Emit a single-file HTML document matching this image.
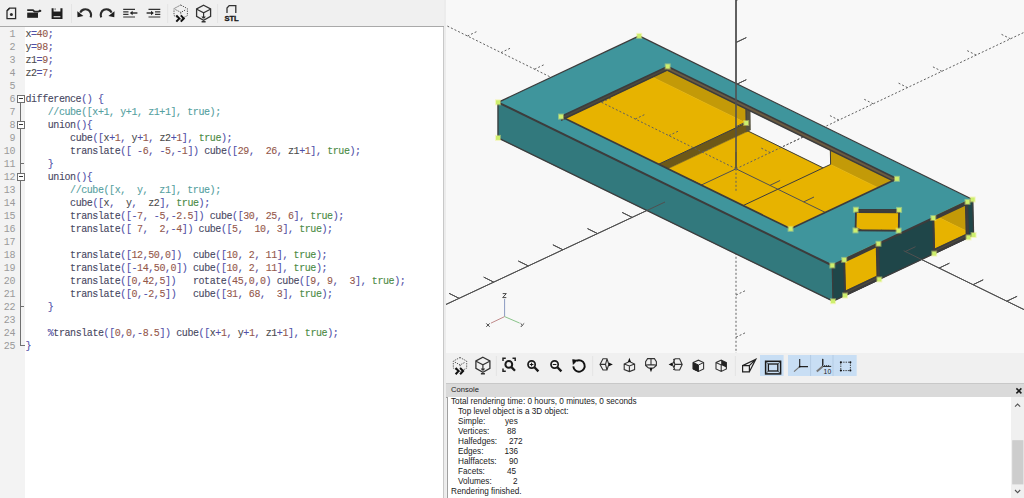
<!DOCTYPE html>
<html><head><meta charset="utf-8"><style>
html,body{margin:0;padding:0}
body{width:1024px;height:498px;overflow:hidden;position:relative;background:#f0f0f0;font-family:"Liberation Sans",sans-serif}
#tb1{position:absolute;left:0;top:0;width:444px;height:26px;background:#f0f0f0;border-bottom:1px solid #a9a9a9}
#ed{position:absolute;left:0;top:27px;width:444px;height:471px;background:#ffffff}
#gut{position:absolute;left:0;top:27px;width:25px;height:471px;background:#f3f3f3}
.ln{position:absolute;left:0;height:13px;line-height:13px;font-family:"Liberation Mono",monospace;font-size:10px;letter-spacing:-0.42px;white-space:pre}
.num{position:absolute;right:-15px;width:15px;text-align:right;color:#9a9a9a;display:none}
.code{position:absolute;left:25.4px;top:0;color:#474747;-webkit-text-stroke:0.1px currentColor}
.k{color:#47475f} .n{color:#94574a} .o{color:#5050a8} .i{color:#4a4a4a} .t{color:#4a8a44} .c{color:#54a0a0} .p{color:#4646a0}
.lnum{position:absolute;left:0;width:15px;text-align:right;height:13px;line-height:13px;font-family:"Liberation Mono",monospace;font-size:10px;color:#9a9a9a;letter-spacing:-0.42px}
.fbox{position:absolute;left:17px;width:6px;height:6px;border:1px solid #707070;background:#fff}
.fbox:after{content:"";position:absolute;left:1px;top:2px;width:4px;height:1px;background:#333}
#split{position:absolute;left:443px;top:27px;width:1px;height:471px;background:#c8c8c8} #split2{position:absolute;left:444px;top:0;width:2px;height:498px;background:#ececec}
#view{position:absolute;left:446px;top:0;width:578px;height:353px;background:#f8f8f8;overflow:hidden}
#tb2{position:absolute;left:446px;top:353px;width:578px;height:29px;background:#f0f0f0}
#chead{position:absolute;left:446px;top:383px;width:578px;height:13px;background:#dadada;border-bottom:1px solid #a0a0a0;border-top:1px solid #c8c8c8}
#chead span{position:absolute;left:5px;top:1px;font-size:7.6px;color:#222}
#cbody{position:absolute;left:447px;top:397px;width:577px;height:101px;background:#fff;border-left:1px solid #a0a0a0;box-sizing:border-box}
.cl{position:absolute;font-size:8.2px;color:#1a1a1a;line-height:10px;white-space:pre}
#sb{position:absolute;left:1011px;top:397px;width:13px;height:101px;background:#f0f0f0}
</style></head><body>
<div id="tb1"><svg width="444" height="26" style="position:absolute;left:0;top:0" fill="none" stroke="#2b2b2b" stroke-linecap="butt">
<!-- new -->
<path d="M9.5,8.2 H15.6 V18.6 H7 V10.8 Z" stroke-width="1.3"/>
<path d="M7,10.8 L9.5,8.2" stroke-width="1.3"/>
<circle cx="11.4" cy="14.6" r="1.5" fill="#2b2b2b" stroke="none"/>
<!-- open -->
<rect x="27.2" y="12.6" width="10.8" height="5.2" fill="#222" stroke="none"/>
<path d="M27.2,10.2 L33,10.2 L34.5,11.6 L38,11.6 L41,10.6" stroke-width="1.8"/>
<path d="M39,9.6 L41.6,10.7 L39.5,12.2 Z" fill="#222" stroke="none"/>
<!-- save -->
<path d="M51.6,8.2 H53.6 V11.6 H60.4 V8.2 H62.5 V19.1 H51.6 Z" fill="#1e1e1e" stroke="none"/>
<rect x="53.6" y="16.2" width="6.8" height="1.1" fill="#f0f0f0" stroke="none"/>
<rect x="54.6" y="8.2" width="1" height="2" fill="#666" stroke="none"/>
<line x1="71.5" y1="4" x2="71.5" y2="23" stroke="#e4e4e4" stroke-width="1"/>
<!-- undo -->
<path d="M90.6,17.4 A5.6,5.6 0 0 0 80.2,12.6" stroke-width="2.2"/>
<path d="M77.3,11.2 L83.4,16 L77.5,17.3 Z" fill="#1e1e1e" stroke="none"/>
<!-- redo -->
<path d="M101.2,17.4 A5.6,5.6 0 0 1 111.6,12.6" stroke-width="2.2"/>
<path d="M114.5,11.2 L108.4,16 L114.3,17.3 Z" fill="#1e1e1e" stroke="none"/>
<!-- unindent -->
<g stroke-width="1.2" stroke="#333">
<path d="M123.2,9.4 H135 M123.2,11.9 H128.5 M123.2,14.4 H128.5 M123.2,17 H135"/>
<path d="M131,13 H137.4" stroke-width="1.5"/>
</g>
<path d="M129.8,13 L132.6,10.8 L132.6,15.2 Z" fill="#222" stroke="none"/>
<!-- indent -->
<g stroke-width="1.2" stroke="#333">
<path d="M148.5,9.4 H160.3 M155,11.9 H160.3 M155,14.4 H160.3 M148.5,17 H160.3"/>
<path d="M146.6,13 H152.5" stroke-width="1.5"/>
</g>
<path d="M153.8,13 L151,10.8 L151,15.2 Z" fill="#222" stroke="none"/>
<line x1="167.7" y1="4" x2="167.7" y2="23" stroke="#e4e4e4" stroke-width="1"/>
<!-- preview -->
<g stroke="#555" stroke-width="1" stroke-dasharray="1.3,1.1">
<path d="M180.7,5 L187.4,8.6 L187.4,15.6 L180.7,19.2 L174,15.6 L174,8.6 Z"/>
<path d="M175.5,9.6 L180.8,12.4 L186.1,9.6 M180.8,12.4 V15"/>
</g>
<path d="M176.3,15.4 L179.3,18.4 L176.3,21.6 M180.8,15.4 L183.8,18.4 L180.8,21.6" stroke="#111" stroke-width="2"/>
<!-- render -->
<path d="M203.6,5.2 L210.6,9 L210.6,16.4 L203.6,20.2 L196.6,16.4 L196.6,9 Z" stroke="#333" stroke-width="1.3"/>
<path d="M196.8,9.2 L203.6,12.8 L210.4,9.2 M203.6,12.8 V17" stroke="#333" stroke-width="1.2"/>
<path d="M201.4,16.4 H205.8 L204.5,18.6 H202.7 Z M201.6,21 H205.6 V22.4 H201.6 Z" fill="#333" stroke="none"/>
<line x1="217.6" y1="4" x2="217.6" y2="23" stroke="#e4e4e4" stroke-width="1"/>
<!-- STL -->
<path d="M227,13 V8 L229.2,5.6 H235.8 V13" stroke="#333" stroke-width="1.3"/>
<text x="231.6" y="20.8" font-family="Liberation Sans" font-weight="bold" font-size="7.6" fill="#1a1a1a" stroke="#1a1a1a" stroke-width="0.35" text-anchor="middle" letter-spacing="-0.1">STL</text>
</svg>
</div>
<div id="ed"></div>
<div id="gut"></div>
<div class="lnum" style="top:28px">1</div><div class="lnum" style="top:41px">2</div><div class="lnum" style="top:54px">3</div><div class="lnum" style="top:67px">4</div><div class="lnum" style="top:80px">5</div><div class="lnum" style="top:93px">6</div><div class="lnum" style="top:106px">7</div><div class="lnum" style="top:119px">8</div><div class="lnum" style="top:132px">9</div><div class="lnum" style="top:145px">10</div><div class="lnum" style="top:158px">11</div><div class="lnum" style="top:171px">12</div><div class="lnum" style="top:184px">13</div><div class="lnum" style="top:197px">14</div><div class="lnum" style="top:210px">15</div><div class="lnum" style="top:223px">16</div><div class="lnum" style="top:236px">17</div><div class="lnum" style="top:249px">18</div><div class="lnum" style="top:262px">19</div><div class="lnum" style="top:275px">20</div><div class="lnum" style="top:288px">21</div><div class="lnum" style="top:301px">22</div><div class="lnum" style="top:314px">23</div><div class="lnum" style="top:327px">24</div><div class="lnum" style="top:340px">25</div>
<div style="position:absolute;left:20px;top:102px;width:1px;height:243px;background:#707070"></div><div style="position:absolute;left:20px;top:163px;width:4px;height:1px;background:#707070"></div><div style="position:absolute;left:20px;top:306px;width:4px;height:1px;background:#707070"></div><div style="position:absolute;left:20px;top:345px;width:5px;height:1px;background:#707070"></div>
<div class="fbox" style="top:95px"></div><div class="fbox" style="top:121px"></div><div class="fbox" style="top:173px"></div>
<div class="ln" style="top:28px"><span class="num">1</span><span class="code"><span class="i">x</span><span class="o">=</span><span class="n">40</span><span class="o">;</span></span></div>
<div class="ln" style="top:41px"><span class="num">2</span><span class="code"><span class="i">y</span><span class="o">=</span><span class="n">98</span><span class="o">;</span></span></div>
<div class="ln" style="top:54px"><span class="num">3</span><span class="code"><span class="i">z1</span><span class="o">=</span><span class="n">9</span><span class="o">;</span></span></div>
<div class="ln" style="top:67px"><span class="num">4</span><span class="code"><span class="i">z2</span><span class="o">=</span><span class="n">7</span><span class="o">;</span></span></div>
<div class="ln" style="top:80px"><span class="num">5</span><span class="code"></span></div>
<div class="ln" style="top:93px"><span class="num">6</span><span class="code"><span class="k">difference</span><span class="o">(</span><span class="o">)</span> <span class="o">{</span></span></div>
<div class="ln" style="top:106px"><span class="num">7</span><span class="code">    <span class="c">//cube([x+1, y+1, z1+1], true);</span></span></div>
<div class="ln" style="top:119px"><span class="num">8</span><span class="code">    <span class="k">union</span><span class="o">(</span><span class="o">)</span><span class="o">{</span></span></div>
<div class="ln" style="top:132px"><span class="num">9</span><span class="code">        <span class="k">cube</span><span class="o">(</span><span class="o">[</span><span class="i">x</span><span class="o">+</span><span class="n">1</span><span class="o">,</span> <span class="i">y</span><span class="o">+</span><span class="n">1</span><span class="o">,</span> <span class="i">z2</span><span class="o">+</span><span class="n">1</span><span class="o">]</span><span class="o">,</span> <span class="t">true</span><span class="o">)</span><span class="o">;</span></span></div>
<div class="ln" style="top:145px"><span class="num">10</span><span class="code">        <span class="k">translate</span><span class="o">(</span><span class="o">[</span> <span class="o">-</span><span class="n">6</span><span class="o">,</span> <span class="o">-</span><span class="n">5</span><span class="o">,</span><span class="o">-</span><span class="n">1</span><span class="o">]</span><span class="o">)</span> <span class="k">cube</span><span class="o">(</span><span class="o">[</span><span class="n">29</span><span class="o">,</span>  <span class="n">26</span><span class="o">,</span> <span class="i">z1</span><span class="o">+</span><span class="n">1</span><span class="o">]</span><span class="o">,</span> <span class="t">true</span><span class="o">)</span><span class="o">;</span></span></div>
<div class="ln" style="top:158px"><span class="num">11</span><span class="code">    <span class="o">}</span></span></div>
<div class="ln" style="top:171px"><span class="num">12</span><span class="code">    <span class="k">union</span><span class="o">(</span><span class="o">)</span><span class="o">{</span></span></div>
<div class="ln" style="top:184px"><span class="num">13</span><span class="code">        <span class="c">//cube([x,  y,  z1], true);</span></span></div>
<div class="ln" style="top:197px"><span class="num">14</span><span class="code">        <span class="k">cube</span><span class="o">(</span><span class="o">[</span><span class="i">x</span><span class="o">,</span>  <span class="i">y</span><span class="o">,</span>  <span class="i">z2</span><span class="o">]</span><span class="o">,</span> <span class="t">true</span><span class="o">)</span><span class="o">;</span></span></div>
<div class="ln" style="top:210px"><span class="num">15</span><span class="code">        <span class="k">translate</span><span class="o">(</span><span class="o">[</span><span class="o">-</span><span class="n">7</span><span class="o">,</span> <span class="o">-</span><span class="n">5</span><span class="o">,</span><span class="o">-</span><span class="n">2.5</span><span class="o">]</span><span class="o">)</span> <span class="k">cube</span><span class="o">(</span><span class="o">[</span><span class="n">30</span><span class="o">,</span> <span class="n">25</span><span class="o">,</span> <span class="n">6</span><span class="o">]</span><span class="o">,</span> <span class="t">true</span><span class="o">)</span><span class="o">;</span></span></div>
<div class="ln" style="top:223px"><span class="num">16</span><span class="code">        <span class="k">translate</span><span class="o">(</span><span class="o">[</span> <span class="n">7</span><span class="o">,</span>  <span class="n">2</span><span class="o">,</span><span class="o">-</span><span class="n">4</span><span class="o">]</span><span class="o">)</span> <span class="k">cube</span><span class="o">(</span><span class="o">[</span><span class="n">5</span><span class="o">,</span>  <span class="n">10</span><span class="o">,</span> <span class="n">3</span><span class="o">]</span><span class="o">,</span> <span class="t">true</span><span class="o">)</span><span class="o">;</span></span></div>
<div class="ln" style="top:236px"><span class="num">17</span><span class="code"></span></div>
<div class="ln" style="top:249px"><span class="num">18</span><span class="code">        <span class="k">translate</span><span class="o">(</span><span class="o">[</span><span class="n">12</span><span class="o">,</span><span class="n">50</span><span class="o">,</span><span class="n">0</span><span class="o">]</span><span class="o">)</span>  <span class="k">cube</span><span class="o">(</span><span class="o">[</span><span class="n">10</span><span class="o">,</span> <span class="n">2</span><span class="o">,</span> <span class="n">11</span><span class="o">]</span><span class="o">,</span> <span class="t">true</span><span class="o">)</span><span class="o">;</span></span></div>
<div class="ln" style="top:262px"><span class="num">19</span><span class="code">        <span class="k">translate</span><span class="o">(</span><span class="o">[</span><span class="o">-</span><span class="n">14</span><span class="o">,</span><span class="n">50</span><span class="o">,</span><span class="n">0</span><span class="o">]</span><span class="o">)</span> <span class="k">cube</span><span class="o">(</span><span class="o">[</span><span class="n">10</span><span class="o">,</span> <span class="n">2</span><span class="o">,</span> <span class="n">11</span><span class="o">]</span><span class="o">,</span> <span class="t">true</span><span class="o">)</span><span class="o">;</span></span></div>
<div class="ln" style="top:275px"><span class="num">20</span><span class="code">        <span class="k">translate</span><span class="o">(</span><span class="o">[</span><span class="n">0</span><span class="o">,</span><span class="n">42</span><span class="o">,</span><span class="n">5</span><span class="o">]</span><span class="o">)</span>   <span class="k">rotate</span><span class="o">(</span><span class="n">45</span><span class="o">,</span><span class="n">0</span><span class="o">,</span><span class="n">0</span><span class="o">)</span> <span class="k">cube</span><span class="o">(</span><span class="o">[</span><span class="n">9</span><span class="o">,</span> <span class="n">9</span><span class="o">,</span>  <span class="n">3</span><span class="o">]</span><span class="o">,</span> <span class="t">true</span><span class="o">)</span><span class="o">;</span></span></div>
<div class="ln" style="top:288px"><span class="num">21</span><span class="code">        <span class="k">translate</span><span class="o">(</span><span class="o">[</span><span class="n">0</span><span class="o">,</span><span class="o">-</span><span class="n">2</span><span class="o">,</span><span class="n">5</span><span class="o">]</span><span class="o">)</span>   <span class="k">cube</span><span class="o">(</span><span class="o">[</span><span class="n">31</span><span class="o">,</span> <span class="n">68</span><span class="o">,</span>  <span class="n">3</span><span class="o">]</span><span class="o">,</span> <span class="t">true</span><span class="o">)</span><span class="o">;</span></span></div>
<div class="ln" style="top:301px"><span class="num">22</span><span class="code">    <span class="o">}</span></span></div>
<div class="ln" style="top:314px"><span class="num">23</span><span class="code"></span></div>
<div class="ln" style="top:327px"><span class="num">24</span><span class="code">    <span class="p">%</span><span class="k">translate</span><span class="o">(</span><span class="o">[</span><span class="n">0</span><span class="o">,</span><span class="n">0</span><span class="o">,</span><span class="o">-</span><span class="n">8.5</span><span class="o">]</span><span class="o">)</span> <span class="k">cube</span><span class="o">(</span><span class="o">[</span><span class="i">x</span><span class="o">+</span><span class="n">1</span><span class="o">,</span> <span class="i">y</span><span class="o">+</span><span class="n">1</span><span class="o">,</span> <span class="i">z1</span><span class="o">+</span><span class="n">1</span><span class="o">]</span><span class="o">,</span> <span class="t">true</span><span class="o">)</span><span class="o">;</span></span></div>
<div class="ln" style="top:340px"><span class="num">25</span><span class="code"><span class="o">}</span></span></div>
<div id="split2"></div><div id="split"></div>
<div id="view"><svg width="578" height="353" viewBox="446 0 578 353" style="position:absolute;left:0;top:0">
<line x1="736.0" y1="168.8" x2="43.8" y2="492.6" stroke="#505050" stroke-width="1"/>
<line x1="736.0" y1="168.8" x2="1413.0" y2="499.8" stroke="#505050" stroke-width="1"/>
<line x1="736.0" y1="168.8" x2="736.0" y2="-673.2" stroke="#505050" stroke-width="1"/>
<line x1="736.0" y1="168.8" x2="1422.2" y2="-156.2" stroke="#606060" stroke-width="1" stroke-dasharray="2,2"/>
<line x1="736.0" y1="168.8" x2="64.6" y2="-163.2" stroke="#606060" stroke-width="1" stroke-dasharray="2,2"/>
<line x1="736.0" y1="168.8" x2="736.0" y2="1010.8" stroke="#606060" stroke-width="1" stroke-dasharray="2,2"/>
<line x1="701.4" y1="185.0" x2="691.3" y2="180.0" stroke="#505050" stroke-width="1"/>
<line x1="769.9" y1="185.4" x2="780.1" y2="180.5" stroke="#505050" stroke-width="1"/>
<line x1="736.0" y1="126.7" x2="746.3" y2="121.8" stroke="#505050" stroke-width="1"/>
<line x1="770.3" y1="152.6" x2="760.2" y2="147.6" stroke="#606060" stroke-width="1" stroke-dasharray="2,2"/>
<line x1="702.4" y1="152.2" x2="712.7" y2="147.3" stroke="#606060" stroke-width="1" stroke-dasharray="2,2"/>
<line x1="736.0" y1="210.9" x2="746.3" y2="206.0" stroke="#606060" stroke-width="1" stroke-dasharray="2,2"/>
<line x1="666.8" y1="201.2" x2="656.7" y2="196.2" stroke="#505050" stroke-width="1"/>
<line x1="803.7" y1="201.9" x2="814.0" y2="197.0" stroke="#505050" stroke-width="1"/>
<line x1="736.0" y1="84.6" x2="746.3" y2="79.7" stroke="#505050" stroke-width="1"/>
<line x1="804.6" y1="136.3" x2="794.5" y2="131.3" stroke="#606060" stroke-width="1" stroke-dasharray="2,2"/>
<line x1="668.9" y1="135.6" x2="679.2" y2="130.7" stroke="#606060" stroke-width="1" stroke-dasharray="2,2"/>
<line x1="736.0" y1="253.0" x2="746.3" y2="248.1" stroke="#606060" stroke-width="1" stroke-dasharray="2,2"/>
<line x1="632.2" y1="217.4" x2="622.1" y2="212.4" stroke="#505050" stroke-width="1"/>
<line x1="837.5" y1="218.5" x2="847.8" y2="213.6" stroke="#505050" stroke-width="1"/>
<line x1="736.0" y1="42.5" x2="746.3" y2="37.6" stroke="#505050" stroke-width="1"/>
<line x1="838.9" y1="120.1" x2="828.9" y2="115.1" stroke="#606060" stroke-width="1" stroke-dasharray="2,2"/>
<line x1="635.3" y1="119.0" x2="645.6" y2="114.1" stroke="#606060" stroke-width="1" stroke-dasharray="2,2"/>
<line x1="736.0" y1="295.1" x2="746.3" y2="290.2" stroke="#606060" stroke-width="1" stroke-dasharray="2,2"/>
<line x1="597.6" y1="233.6" x2="587.5" y2="228.6" stroke="#505050" stroke-width="1"/>
<line x1="871.4" y1="235.0" x2="881.7" y2="230.1" stroke="#505050" stroke-width="1"/>
<line x1="736.0" y1="0.4" x2="746.3" y2="-4.5" stroke="#505050" stroke-width="1"/>
<line x1="873.2" y1="103.8" x2="863.2" y2="98.8" stroke="#606060" stroke-width="1" stroke-dasharray="2,2"/>
<line x1="601.7" y1="102.4" x2="612.0" y2="97.5" stroke="#606060" stroke-width="1" stroke-dasharray="2,2"/>
<line x1="736.0" y1="337.2" x2="746.3" y2="332.3" stroke="#606060" stroke-width="1" stroke-dasharray="2,2"/>
<line x1="563.0" y1="249.8" x2="552.9" y2="244.8" stroke="#505050" stroke-width="1"/>
<line x1="905.2" y1="251.6" x2="915.5" y2="246.7" stroke="#505050" stroke-width="1"/>
<line x1="736.0" y1="-41.7" x2="746.3" y2="-46.6" stroke="#505050" stroke-width="1"/>
<line x1="907.5" y1="87.6" x2="897.5" y2="82.6" stroke="#606060" stroke-width="1" stroke-dasharray="2,2"/>
<line x1="568.1" y1="85.8" x2="578.4" y2="80.9" stroke="#606060" stroke-width="1" stroke-dasharray="2,2"/>
<line x1="736.0" y1="379.3" x2="746.3" y2="374.4" stroke="#606060" stroke-width="1" stroke-dasharray="2,2"/>
<line x1="528.3" y1="265.9" x2="518.3" y2="261.0" stroke="#505050" stroke-width="1"/>
<line x1="939.1" y1="268.1" x2="949.4" y2="263.2" stroke="#505050" stroke-width="1"/>
<line x1="736.0" y1="-83.8" x2="746.3" y2="-88.7" stroke="#505050" stroke-width="1"/>
<line x1="941.9" y1="71.3" x2="931.8" y2="66.3" stroke="#606060" stroke-width="1" stroke-dasharray="2,2"/>
<line x1="534.6" y1="69.2" x2="544.9" y2="64.3" stroke="#606060" stroke-width="1" stroke-dasharray="2,2"/>
<line x1="736.0" y1="421.4" x2="746.3" y2="416.5" stroke="#606060" stroke-width="1" stroke-dasharray="2,2"/>
<line x1="493.7" y1="282.1" x2="483.7" y2="277.1" stroke="#505050" stroke-width="1"/>
<line x1="973.0" y1="284.7" x2="983.2" y2="279.8" stroke="#505050" stroke-width="1"/>
<line x1="736.0" y1="-125.9" x2="746.3" y2="-130.8" stroke="#505050" stroke-width="1"/>
<line x1="976.2" y1="55.1" x2="966.1" y2="50.1" stroke="#606060" stroke-width="1" stroke-dasharray="2,2"/>
<line x1="501.0" y1="52.6" x2="511.3" y2="47.7" stroke="#606060" stroke-width="1" stroke-dasharray="2,2"/>
<line x1="736.0" y1="463.5" x2="746.3" y2="458.6" stroke="#606060" stroke-width="1" stroke-dasharray="2,2"/>
<line x1="459.1" y1="298.3" x2="449.0" y2="293.3" stroke="#505050" stroke-width="1"/>
<line x1="1006.8" y1="301.2" x2="1017.1" y2="296.3" stroke="#505050" stroke-width="1"/>
<line x1="736.0" y1="-168.0" x2="746.3" y2="-172.9" stroke="#505050" stroke-width="1"/>
<line x1="1010.5" y1="38.8" x2="1000.4" y2="33.8" stroke="#606060" stroke-width="1" stroke-dasharray="2,2"/>
<line x1="467.4" y1="36.0" x2="477.7" y2="31.1" stroke="#606060" stroke-width="1" stroke-dasharray="2,2"/>
<line x1="736.0" y1="505.6" x2="746.3" y2="500.7" stroke="#606060" stroke-width="1" stroke-dasharray="2,2"/>
<line x1="424.5" y1="314.5" x2="414.4" y2="309.5" stroke="#505050" stroke-width="1"/>
<line x1="1040.7" y1="317.8" x2="1050.9" y2="312.9" stroke="#505050" stroke-width="1"/>
<line x1="736.0" y1="-210.1" x2="746.3" y2="-215.0" stroke="#505050" stroke-width="1"/>
<line x1="1044.8" y1="22.6" x2="1034.7" y2="17.6" stroke="#606060" stroke-width="1" stroke-dasharray="2,2"/>
<line x1="433.9" y1="19.4" x2="444.2" y2="14.5" stroke="#606060" stroke-width="1" stroke-dasharray="2,2"/>
<line x1="736.0" y1="547.7" x2="746.3" y2="542.8" stroke="#606060" stroke-width="1" stroke-dasharray="2,2"/>
<line x1="389.9" y1="330.7" x2="379.8" y2="325.7" stroke="#505050" stroke-width="1"/>
<line x1="1074.5" y1="334.3" x2="1084.8" y2="329.4" stroke="#505050" stroke-width="1"/>
<line x1="736.0" y1="-252.2" x2="746.3" y2="-257.1" stroke="#505050" stroke-width="1"/>
<line x1="1079.1" y1="6.3" x2="1069.0" y2="1.3" stroke="#606060" stroke-width="1" stroke-dasharray="2,2"/>
<line x1="400.3" y1="2.8" x2="410.6" y2="-2.1" stroke="#606060" stroke-width="1" stroke-dasharray="2,2"/>
<line x1="736.0" y1="589.8" x2="746.3" y2="584.9" stroke="#606060" stroke-width="1" stroke-dasharray="2,2"/>
<line x1="355.3" y1="346.9" x2="345.2" y2="341.9" stroke="#505050" stroke-width="1"/>
<line x1="1108.3" y1="350.9" x2="1118.6" y2="346.0" stroke="#505050" stroke-width="1"/>
<line x1="736.0" y1="-294.3" x2="746.3" y2="-299.2" stroke="#505050" stroke-width="1"/>
<line x1="1113.4" y1="-9.9" x2="1103.3" y2="-14.9" stroke="#606060" stroke-width="1" stroke-dasharray="2,2"/>
<line x1="366.7" y1="-13.8" x2="377.0" y2="-18.7" stroke="#606060" stroke-width="1" stroke-dasharray="2,2"/>
<line x1="736.0" y1="631.9" x2="746.3" y2="627.0" stroke="#606060" stroke-width="1" stroke-dasharray="2,2"/>
<line x1="320.7" y1="363.1" x2="310.6" y2="358.1" stroke="#505050" stroke-width="1"/>
<line x1="1142.2" y1="367.4" x2="1152.5" y2="362.5" stroke="#505050" stroke-width="1"/>
<line x1="736.0" y1="-336.4" x2="746.3" y2="-341.3" stroke="#505050" stroke-width="1"/>
<line x1="1147.7" y1="-26.2" x2="1137.6" y2="-31.2" stroke="#606060" stroke-width="1" stroke-dasharray="2,2"/>
<line x1="333.2" y1="-30.4" x2="343.5" y2="-35.3" stroke="#606060" stroke-width="1" stroke-dasharray="2,2"/>
<line x1="736.0" y1="674.0" x2="746.3" y2="669.1" stroke="#606060" stroke-width="1" stroke-dasharray="2,2"/>
<line x1="286.1" y1="379.3" x2="276.0" y2="374.3" stroke="#505050" stroke-width="1"/>
<line x1="1176.0" y1="384.0" x2="1186.3" y2="379.1" stroke="#505050" stroke-width="1"/>
<line x1="736.0" y1="-378.5" x2="746.3" y2="-383.4" stroke="#505050" stroke-width="1"/>
<line x1="1182.0" y1="-42.4" x2="1172.0" y2="-47.4" stroke="#606060" stroke-width="1" stroke-dasharray="2,2"/>
<line x1="299.6" y1="-47.0" x2="309.9" y2="-51.9" stroke="#606060" stroke-width="1" stroke-dasharray="2,2"/>
<line x1="736.0" y1="716.1" x2="746.3" y2="711.2" stroke="#606060" stroke-width="1" stroke-dasharray="2,2"/>
<line x1="251.5" y1="395.5" x2="241.4" y2="390.5" stroke="#505050" stroke-width="1"/>
<line x1="1209.9" y1="400.5" x2="1220.2" y2="395.6" stroke="#505050" stroke-width="1"/>
<line x1="736.0" y1="-420.6" x2="746.3" y2="-425.5" stroke="#505050" stroke-width="1"/>
<line x1="1216.3" y1="-58.7" x2="1206.3" y2="-63.7" stroke="#606060" stroke-width="1" stroke-dasharray="2,2"/>
<line x1="266.0" y1="-63.6" x2="276.3" y2="-68.5" stroke="#606060" stroke-width="1" stroke-dasharray="2,2"/>
<line x1="736.0" y1="758.2" x2="746.3" y2="753.3" stroke="#606060" stroke-width="1" stroke-dasharray="2,2"/>
<line x1="216.9" y1="411.6" x2="206.8" y2="406.7" stroke="#505050" stroke-width="1"/>
<line x1="1243.8" y1="417.1" x2="1254.0" y2="412.2" stroke="#505050" stroke-width="1"/>
<line x1="736.0" y1="-462.7" x2="746.3" y2="-467.6" stroke="#505050" stroke-width="1"/>
<line x1="1250.7" y1="-74.9" x2="1240.6" y2="-79.9" stroke="#606060" stroke-width="1" stroke-dasharray="2,2"/>
<line x1="232.4" y1="-80.2" x2="242.7" y2="-85.1" stroke="#606060" stroke-width="1" stroke-dasharray="2,2"/>
<line x1="736.0" y1="800.3" x2="746.3" y2="795.4" stroke="#606060" stroke-width="1" stroke-dasharray="2,2"/>
<line x1="182.2" y1="427.8" x2="172.2" y2="422.9" stroke="#505050" stroke-width="1"/>
<line x1="1277.6" y1="433.6" x2="1287.9" y2="428.7" stroke="#505050" stroke-width="1"/>
<line x1="736.0" y1="-504.8" x2="746.3" y2="-509.7" stroke="#505050" stroke-width="1"/>
<line x1="1285.0" y1="-91.2" x2="1274.9" y2="-96.2" stroke="#606060" stroke-width="1" stroke-dasharray="2,2"/>
<line x1="198.9" y1="-96.8" x2="209.2" y2="-101.7" stroke="#606060" stroke-width="1" stroke-dasharray="2,2"/>
<line x1="736.0" y1="842.4" x2="746.3" y2="837.5" stroke="#606060" stroke-width="1" stroke-dasharray="2,2"/>
<line x1="147.6" y1="444.0" x2="137.6" y2="439.1" stroke="#505050" stroke-width="1"/>
<line x1="1311.4" y1="450.2" x2="1321.7" y2="445.3" stroke="#505050" stroke-width="1"/>
<line x1="736.0" y1="-546.9" x2="746.3" y2="-551.8" stroke="#505050" stroke-width="1"/>
<line x1="1319.3" y1="-107.4" x2="1309.2" y2="-112.4" stroke="#606060" stroke-width="1" stroke-dasharray="2,2"/>
<line x1="165.3" y1="-113.4" x2="175.6" y2="-118.3" stroke="#606060" stroke-width="1" stroke-dasharray="2,2"/>
<line x1="736.0" y1="884.5" x2="746.3" y2="879.6" stroke="#606060" stroke-width="1" stroke-dasharray="2,2"/>
<line x1="113.0" y1="460.2" x2="102.9" y2="455.2" stroke="#505050" stroke-width="1"/>
<line x1="1345.3" y1="466.7" x2="1355.6" y2="461.8" stroke="#505050" stroke-width="1"/>
<line x1="736.0" y1="-589.0" x2="746.3" y2="-593.9" stroke="#505050" stroke-width="1"/>
<line x1="1353.6" y1="-123.7" x2="1343.5" y2="-128.7" stroke="#606060" stroke-width="1" stroke-dasharray="2,2"/>
<line x1="131.7" y1="-130.0" x2="142.0" y2="-134.9" stroke="#606060" stroke-width="1" stroke-dasharray="2,2"/>
<line x1="736.0" y1="926.6" x2="746.3" y2="921.7" stroke="#606060" stroke-width="1" stroke-dasharray="2,2"/>
<line x1="78.4" y1="476.4" x2="68.3" y2="471.4" stroke="#505050" stroke-width="1"/>
<line x1="1379.2" y1="483.2" x2="1389.4" y2="478.4" stroke="#505050" stroke-width="1"/>
<line x1="736.0" y1="-631.1" x2="746.3" y2="-636.0" stroke="#505050" stroke-width="1"/>
<line x1="1387.9" y1="-139.9" x2="1377.8" y2="-144.9" stroke="#606060" stroke-width="1" stroke-dasharray="2,2"/>
<line x1="98.2" y1="-146.6" x2="108.5" y2="-151.5" stroke="#606060" stroke-width="1" stroke-dasharray="2,2"/>
<line x1="736.0" y1="968.7" x2="746.3" y2="963.8" stroke="#606060" stroke-width="1" stroke-dasharray="2,2"/>
<polygon points="639.5,70.7 746.2,123.0 745.9,105.3 830.3,146.6 830.6,164.4 970.2,232.8 969.3,201.7 639.2,39.7" fill="#c39a08" stroke="#c39a08" stroke-width="0.5" />
<polygon points="639.5,70.7 501.4,135.7 501.4,104.6 639.2,39.7" fill="#6d5818" stroke="#6d5818" stroke-width="0.5" />
<polygon points="639.5,70.7 501.4,135.7 608.4,187.8 746.2,123.0" fill="#e7b300" stroke="#e7b300" stroke-width="0.5" />
<polygon points="748.1,131.1 649.8,177.3 734.4,218.6 832.5,172.5" fill="#e7b300" stroke="#e7b300" stroke-width="0.5" />
<polygon points="747.9,122.2 649.8,168.4 649.8,177.3 748.1,131.1" fill="#6d5818" stroke="#6d5818" stroke-width="0.5" />
<polygon points="750.1,102.0 745.9,104.0 746.3,131.9 750.5,130.0" fill="#56523f" stroke="#56523f" stroke-width="0.5" />
<line x1="748.1" y1="131.1" x2="832.5" y2="172.5" stroke="#3c3c3c" stroke-width="1" />
<line x1="746.2" y1="123.0" x2="649.8" y2="168.4" stroke="#3c3c3c" stroke-width="1" />
<polygon points="649.8,168.4 608.4,187.8 693.1,229.1 734.3,209.7" fill="#e7b300" stroke="#e7b300" stroke-width="0.5" />
<polygon points="830.6,164.4 693.1,229.1 832.9,297.3 970.2,232.8" fill="#e7b300" stroke="#e7b300" stroke-width="0.5" />
<line x1="830.6" y1="164.4" x2="693.1" y2="229.1" stroke="#3c3c3c" stroke-width="1" />
<line x1="745.9" y1="105.3" x2="746.2" y2="123.0" stroke="#3c3c3c" stroke-width="1" />
<line x1="830.3" y1="146.6" x2="830.6" y2="164.4" stroke="#3c3c3c" stroke-width="1" />
<line x1="745.9" y1="105.3" x2="830.3" y2="146.6" stroke="#3c3c3c" stroke-width="1" />
<line x1="736.0" y1="168.8" x2="666.8" y2="201.2" stroke="#505050" stroke-width="1"/>
<line x1="736.0" y1="168.8" x2="901.9" y2="249.9" stroke="#505050" stroke-width="1"/>
<line x1="736.0" y1="168.8" x2="736.0" y2="152.0" stroke="#454545" stroke-width="1.6"/>
<line x1="736.0" y1="168.8" x2="804.6" y2="136.3" stroke="#606060" stroke-width="1" stroke-dasharray="2,2"/>
<line x1="736.0" y1="168.8" x2="571.5" y2="87.5" stroke="#606060" stroke-width="1" stroke-dasharray="2,2"/>
<line x1="736.0" y1="168.8" x2="736.0" y2="192.0" stroke="#606060" stroke-width="1" stroke-dasharray="2,2"/>
<line x1="701.4" y1="185.0" x2="691.3" y2="180.0" stroke="#505050" stroke-width="1"/>
<line x1="769.9" y1="185.4" x2="780.1" y2="180.5" stroke="#505050" stroke-width="1"/>
<line x1="702.4" y1="152.2" x2="712.7" y2="147.3" stroke="#606060" stroke-width="1" stroke-dasharray="2,2"/>
<line x1="803.7" y1="201.9" x2="814.0" y2="197.0" stroke="#505050" stroke-width="1"/>
<line x1="668.9" y1="135.6" x2="679.2" y2="130.7" stroke="#606060" stroke-width="1" stroke-dasharray="2,2"/>
<line x1="837.5" y1="218.5" x2="847.8" y2="213.6" stroke="#505050" stroke-width="1"/>
<line x1="635.3" y1="119.0" x2="645.6" y2="114.1" stroke="#606060" stroke-width="1" stroke-dasharray="2,2"/>
<line x1="871.4" y1="235.0" x2="881.7" y2="230.1" stroke="#505050" stroke-width="1"/>
<line x1="601.7" y1="102.4" x2="612.0" y2="97.5" stroke="#606060" stroke-width="1" stroke-dasharray="2,2"/>
<line x1="770.3" y1="152.6" x2="760.2" y2="147.6" stroke="#606060" stroke-width="1" stroke-dasharray="2,2"/>
<line x1="804.6" y1="136.3" x2="794.5" y2="131.3" stroke="#606060" stroke-width="1" stroke-dasharray="2,2"/>
<polygon points="561.0,120.2 667.7,69.9 667.7,66.4 561.0,116.6" fill="#4e4a3c" stroke="#4e4a3c" stroke-width="0.5" />
<polygon points="667.7,70.4 893.6,181.1 896.9,178.8 667.7,66.4" fill="#6a5a40" stroke="#6a5a40" stroke-width="0.5" />
<polygon points="899.2,212.2 856.0,212.0 855.9,209.7 899.1,209.9" fill="#4e4a3c" stroke="#4e4a3c" stroke-width="0.5" />
<polygon points="876.9,246.1 842.6,262.2 842.6,259.1 876.8,243.0" fill="#4d4a3e" stroke="#4d4a3e" stroke-width="0.5" />
<polygon points="879.3,279.4 845.0,295.5 843.2,292.0 877.5,275.9" fill="#4d4a3e" stroke="#4d4a3e" stroke-width="0.5" />
<polygon points="877.6,278.6 879.3,279.4 878.5,243.8 876.8,243.0" fill="#4f5650" stroke="#4f5650" stroke-width="0.5" />
<polygon points="965.9,204.2 931.7,220.3 931.6,217.2 965.9,201.1" fill="#4d4a3e" stroke="#4d4a3e" stroke-width="0.5" />
<polygon points="968.5,237.4 934.2,253.6 932.4,250.1 966.7,233.9" fill="#4d4a3e" stroke="#4d4a3e" stroke-width="0.5" />
<polygon points="966.8,236.6 968.5,237.4 967.5,201.9 965.9,201.1" fill="#4f5650" stroke="#4f5650" stroke-width="0.5" />
<path d="M498.0,102.3 L832.3,265.5 L844.2,259.9 L842.6,259.1 L876.8,243.0 L878.5,243.8 L933.3,218.0 L931.6,217.2 L965.9,201.1 L967.5,201.9 L972.7,199.5 L639.2,35.9Z M561.0,116.6 L790.6,228.8 L896.9,178.8 L667.7,66.4Z M855.5,230.4 L898.6,230.6 L899.1,209.9 L855.9,209.7Z " fill="#3f959c" fill-rule="evenodd" />
<polygon points="498.0,137.9 833.0,301.2 832.3,265.5 498.0,102.3" fill="#32797d" stroke="#32797d" stroke-width="0.5" />
<polygon points="833.0,301.2 845.0,295.5 844.2,259.9 832.3,265.5" fill="#1f4649" stroke="#1f4649" stroke-width="0.5" />
<polygon points="879.3,279.4 934.2,253.6 933.3,218.0 878.5,243.8" fill="#1f4649" stroke="#1f4649" stroke-width="0.5" />
<polygon points="968.5,237.4 973.6,235.0 972.7,199.5 967.5,201.9" fill="#1f4649" stroke="#1f4649" stroke-width="0.5" />
<line x1="498.0" y1="102.3" x2="832.3" y2="265.5" stroke="#3c3c3c" stroke-width="2.0" />
<line x1="498.0" y1="102.3" x2="639.2" y2="35.9" stroke="#3c3c3c" stroke-width="1.3" />
<line x1="639.2" y1="35.9" x2="972.7" y2="199.5" stroke="#3c3c3c" stroke-width="1.3" />
<line x1="832.3" y1="265.5" x2="972.7" y2="199.5" stroke="#3c3c3c" stroke-width="2.2" />
<line x1="498.0" y1="137.9" x2="833.0" y2="301.2" stroke="#3c3c3c" stroke-width="1.3" />
<line x1="833.0" y1="301.2" x2="973.6" y2="235.0" stroke="#3c3c3c" stroke-width="1.3" />
<line x1="498.0" y1="102.3" x2="498.0" y2="137.9" stroke="#3c3c3c" stroke-width="1.3" />
<line x1="832.3" y1="265.5" x2="833.0" y2="301.2" stroke="#3c3c3c" stroke-width="1.3" />
<line x1="972.7" y1="199.5" x2="973.6" y2="235.0" stroke="#3c3c3c" stroke-width="1.3" />
<line x1="561.0" y1="116.6" x2="790.6" y2="228.8" stroke="#3c3c3c" stroke-width="1.7" />
<line x1="790.6" y1="228.8" x2="896.9" y2="178.8" stroke="#3c3c3c" stroke-width="1.7" />
<line x1="896.9" y1="178.8" x2="667.7" y2="66.4" stroke="#3c3c3c" stroke-width="1.7" />
<line x1="667.7" y1="66.4" x2="561.0" y2="116.6" stroke="#3c3c3c" stroke-width="1.7" />
<line x1="561.0" y1="120.2" x2="667.7" y2="69.9" stroke="#3c3c3c" stroke-width="1.6" />
<line x1="667.7" y1="70.4" x2="893.6" y2="181.1" stroke="#3c3c3c" stroke-width="1.6" />
<line x1="855.5" y1="230.4" x2="898.6" y2="230.6" stroke="#3c3c3c" stroke-width="1.3" />
<line x1="898.6" y1="230.6" x2="899.1" y2="209.9" stroke="#3c3c3c" stroke-width="1.3" />
<line x1="899.1" y1="209.9" x2="855.9" y2="209.7" stroke="#3c3c3c" stroke-width="1.3" />
<line x1="855.9" y1="209.7" x2="855.5" y2="230.4" stroke="#3c3c3c" stroke-width="1.3" />
<line x1="899.2" y1="212.2" x2="856.0" y2="212.0" stroke="#3c3c3c" stroke-width="2.2" />
<line x1="855.5" y1="230.4" x2="898.6" y2="230.6" stroke="#3c3c3c" stroke-width="1.6" />
<line x1="898.6" y1="230.6" x2="899.1" y2="209.9" stroke="#3c3c3c" stroke-width="1.6" />
<line x1="899.1" y1="209.9" x2="855.9" y2="209.7" stroke="#3c3c3c" stroke-width="1.6" />
<line x1="855.9" y1="209.7" x2="855.5" y2="230.4" stroke="#3c3c3c" stroke-width="1.6" />
<line x1="844.2" y1="259.9" x2="845.0" y2="295.5" stroke="#3c3c3c" stroke-width="1.3" />
<line x1="878.5" y1="243.8" x2="879.3" y2="279.4" stroke="#3c3c3c" stroke-width="1.3" />
<line x1="933.3" y1="218.0" x2="934.2" y2="253.6" stroke="#3c3c3c" stroke-width="1.3" />
<line x1="967.5" y1="201.9" x2="968.5" y2="237.4" stroke="#3c3c3c" stroke-width="1.3" />
<line x1="876.9" y1="246.1" x2="842.6" y2="262.2" stroke="#3c3c3c" stroke-width="2.2" />
<line x1="877.5" y1="276.3" x2="843.2" y2="292.5" stroke="#3c3c3c" stroke-width="1.6" />
<line x1="878.6" y1="279.1" x2="844.3" y2="295.2" stroke="#3c3c3c" stroke-width="2.0" />
<line x1="845.0" y1="295.5" x2="844.2" y2="259.9" stroke="#3c3c3c" stroke-width="2.0" />
<line x1="879.3" y1="279.4" x2="845.0" y2="295.5" stroke="#3c3c3c" stroke-width="1.6" />
<line x1="877.6" y1="278.6" x2="876.8" y2="243.0" stroke="#3c3c3c" stroke-width="2.2" />
<line x1="965.9" y1="204.2" x2="931.7" y2="220.3" stroke="#3c3c3c" stroke-width="2.2" />
<line x1="966.8" y1="234.4" x2="932.4" y2="250.5" stroke="#3c3c3c" stroke-width="1.6" />
<line x1="967.8" y1="237.1" x2="933.5" y2="253.2" stroke="#3c3c3c" stroke-width="2.0" />
<line x1="934.2" y1="253.6" x2="933.3" y2="218.0" stroke="#3c3c3c" stroke-width="2.0" />
<line x1="968.5" y1="237.4" x2="934.2" y2="253.6" stroke="#3c3c3c" stroke-width="1.6" />
<line x1="966.8" y1="236.6" x2="965.9" y2="201.1" stroke="#3c3c3c" stroke-width="2.2" />
<line x1="736.0" y1="152.0" x2="736.0" y2="-673.2" stroke="#505050" stroke-width="1.6"/>
<line x1="665.0" y1="202.0" x2="43.8" y2="492.6" stroke="#505050" stroke-width="1"/>
<line x1="903.6" y1="250.7" x2="1413.0" y2="499.8" stroke="#505050" stroke-width="1"/>
<line x1="736.0" y1="126.7" x2="746.3" y2="121.8" stroke="#505050" stroke-width="1"/>
<line x1="736.0" y1="84.6" x2="746.3" y2="79.7" stroke="#505050" stroke-width="1"/>
<line x1="736.0" y1="42.5" x2="746.3" y2="37.6" stroke="#505050" stroke-width="1"/>
<line x1="632.2" y1="217.4" x2="622.1" y2="212.4" stroke="#505050" stroke-width="1"/>
<line x1="736.0" y1="0.4" x2="746.3" y2="-4.5" stroke="#505050" stroke-width="1"/>
<line x1="597.6" y1="233.6" x2="587.5" y2="228.6" stroke="#505050" stroke-width="1"/>
<line x1="736.0" y1="-41.7" x2="746.3" y2="-46.6" stroke="#505050" stroke-width="1"/>
<line x1="563.0" y1="249.8" x2="552.9" y2="244.8" stroke="#505050" stroke-width="1"/>
<line x1="905.2" y1="251.6" x2="915.5" y2="246.7" stroke="#505050" stroke-width="1"/>
<line x1="736.0" y1="-83.8" x2="746.3" y2="-88.7" stroke="#505050" stroke-width="1"/>
<line x1="528.3" y1="265.9" x2="518.3" y2="261.0" stroke="#505050" stroke-width="1"/>
<line x1="939.1" y1="268.1" x2="949.4" y2="263.2" stroke="#505050" stroke-width="1"/>
<line x1="736.0" y1="-125.9" x2="746.3" y2="-130.8" stroke="#505050" stroke-width="1"/>
<line x1="493.7" y1="282.1" x2="483.7" y2="277.1" stroke="#505050" stroke-width="1"/>
<line x1="973.0" y1="284.7" x2="983.2" y2="279.8" stroke="#505050" stroke-width="1"/>
<line x1="736.0" y1="-168.0" x2="746.3" y2="-172.9" stroke="#505050" stroke-width="1"/>
<line x1="459.1" y1="298.3" x2="449.0" y2="293.3" stroke="#505050" stroke-width="1"/>
<line x1="1006.8" y1="301.2" x2="1017.1" y2="296.3" stroke="#505050" stroke-width="1"/>
<line x1="736.0" y1="-210.1" x2="746.3" y2="-215.0" stroke="#505050" stroke-width="1"/>
<line x1="424.5" y1="314.5" x2="414.4" y2="309.5" stroke="#505050" stroke-width="1"/>
<line x1="1040.7" y1="317.8" x2="1050.9" y2="312.9" stroke="#505050" stroke-width="1"/>
<line x1="736.0" y1="-252.2" x2="746.3" y2="-257.1" stroke="#505050" stroke-width="1"/>
<line x1="389.9" y1="330.7" x2="379.8" y2="325.7" stroke="#505050" stroke-width="1"/>
<line x1="1074.5" y1="334.3" x2="1084.8" y2="329.4" stroke="#505050" stroke-width="1"/>
<line x1="736.0" y1="-294.3" x2="746.3" y2="-299.2" stroke="#505050" stroke-width="1"/>
<line x1="355.3" y1="346.9" x2="345.2" y2="341.9" stroke="#505050" stroke-width="1"/>
<line x1="1108.3" y1="350.9" x2="1118.6" y2="346.0" stroke="#505050" stroke-width="1"/>
<line x1="736.0" y1="-336.4" x2="746.3" y2="-341.3" stroke="#505050" stroke-width="1"/>
<line x1="320.7" y1="363.1" x2="310.6" y2="358.1" stroke="#505050" stroke-width="1"/>
<line x1="1142.2" y1="367.4" x2="1152.5" y2="362.5" stroke="#505050" stroke-width="1"/>
<line x1="736.0" y1="-378.5" x2="746.3" y2="-383.4" stroke="#505050" stroke-width="1"/>
<line x1="286.1" y1="379.3" x2="276.0" y2="374.3" stroke="#505050" stroke-width="1"/>
<line x1="1176.0" y1="384.0" x2="1186.3" y2="379.1" stroke="#505050" stroke-width="1"/>
<line x1="736.0" y1="-420.6" x2="746.3" y2="-425.5" stroke="#505050" stroke-width="1"/>
<line x1="251.5" y1="395.5" x2="241.4" y2="390.5" stroke="#505050" stroke-width="1"/>
<line x1="1209.9" y1="400.5" x2="1220.2" y2="395.6" stroke="#505050" stroke-width="1"/>
<line x1="736.0" y1="-462.7" x2="746.3" y2="-467.6" stroke="#505050" stroke-width="1"/>
<line x1="216.9" y1="411.6" x2="206.8" y2="406.7" stroke="#505050" stroke-width="1"/>
<line x1="1243.8" y1="417.1" x2="1254.0" y2="412.2" stroke="#505050" stroke-width="1"/>
<line x1="736.0" y1="-504.8" x2="746.3" y2="-509.7" stroke="#505050" stroke-width="1"/>
<line x1="182.2" y1="427.8" x2="172.2" y2="422.9" stroke="#505050" stroke-width="1"/>
<line x1="1277.6" y1="433.6" x2="1287.9" y2="428.7" stroke="#505050" stroke-width="1"/>
<line x1="736.0" y1="-546.9" x2="746.3" y2="-551.8" stroke="#505050" stroke-width="1"/>
<line x1="147.6" y1="444.0" x2="137.6" y2="439.1" stroke="#505050" stroke-width="1"/>
<line x1="1311.4" y1="450.2" x2="1321.7" y2="445.3" stroke="#505050" stroke-width="1"/>
<line x1="736.0" y1="-589.0" x2="746.3" y2="-593.9" stroke="#505050" stroke-width="1"/>
<line x1="113.0" y1="460.2" x2="102.9" y2="455.2" stroke="#505050" stroke-width="1"/>
<line x1="1345.3" y1="466.7" x2="1355.6" y2="461.8" stroke="#505050" stroke-width="1"/>
<line x1="736.0" y1="-631.1" x2="746.3" y2="-636.0" stroke="#505050" stroke-width="1"/>
<line x1="78.4" y1="476.4" x2="68.3" y2="471.4" stroke="#505050" stroke-width="1"/>
<line x1="1379.2" y1="483.2" x2="1389.4" y2="478.4" stroke="#505050" stroke-width="1"/>
<rect x="743.2" y="120.0" width="6" height="6" fill="#eef27a" opacity="0.45"/>
<rect x="744.2" y="121.0" width="4" height="4" fill="#cdef6e"/>
<rect x="495.0" y="99.3" width="6" height="6" fill="#eef27a" opacity="0.45"/>
<rect x="496.0" y="100.3" width="4" height="4" fill="#cdef6e"/>
<rect x="636.2" y="32.9" width="6" height="6" fill="#eef27a" opacity="0.45"/>
<rect x="637.2" y="33.9" width="4" height="4" fill="#cdef6e"/>
<rect x="829.3" y="262.5" width="6" height="6" fill="#eef27a" opacity="0.45"/>
<rect x="830.3" y="263.5" width="4" height="4" fill="#cdef6e"/>
<rect x="969.7" y="196.5" width="6" height="6" fill="#eef27a" opacity="0.45"/>
<rect x="970.7" y="197.5" width="4" height="4" fill="#cdef6e"/>
<rect x="495.0" y="134.9" width="6" height="6" fill="#eef27a" opacity="0.45"/>
<rect x="496.0" y="135.9" width="4" height="4" fill="#cdef6e"/>
<rect x="830.0" y="298.2" width="6" height="6" fill="#eef27a" opacity="0.45"/>
<rect x="831.0" y="299.2" width="4" height="4" fill="#cdef6e"/>
<rect x="970.6" y="232.0" width="6" height="6" fill="#eef27a" opacity="0.45"/>
<rect x="971.6" y="233.0" width="4" height="4" fill="#cdef6e"/>
<rect x="558.0" y="113.6" width="6" height="6" fill="#eef27a" opacity="0.45"/>
<rect x="559.0" y="114.6" width="4" height="4" fill="#cdef6e"/>
<rect x="787.6" y="225.8" width="6" height="6" fill="#eef27a" opacity="0.45"/>
<rect x="788.6" y="226.8" width="4" height="4" fill="#cdef6e"/>
<rect x="893.9" y="175.8" width="6" height="6" fill="#eef27a" opacity="0.45"/>
<rect x="894.9" y="176.8" width="4" height="4" fill="#cdef6e"/>
<rect x="664.7" y="63.4" width="6" height="6" fill="#eef27a" opacity="0.45"/>
<rect x="665.7" y="64.4" width="4" height="4" fill="#cdef6e"/>
<rect x="852.5" y="227.4" width="6" height="6" fill="#eef27a" opacity="0.45"/>
<rect x="853.5" y="228.4" width="4" height="4" fill="#cdef6e"/>
<rect x="895.6" y="227.6" width="6" height="6" fill="#eef27a" opacity="0.45"/>
<rect x="896.6" y="228.6" width="4" height="4" fill="#cdef6e"/>
<rect x="896.1" y="206.9" width="6" height="6" fill="#eef27a" opacity="0.45"/>
<rect x="897.1" y="207.9" width="4" height="4" fill="#cdef6e"/>
<rect x="852.9" y="206.7" width="6" height="6" fill="#eef27a" opacity="0.45"/>
<rect x="853.9" y="207.7" width="4" height="4" fill="#cdef6e"/>
<rect x="841.2" y="256.9" width="6" height="6" fill="#eef27a" opacity="0.45"/>
<rect x="842.2" y="257.9" width="4" height="4" fill="#cdef6e"/>
<rect x="842.0" y="292.5" width="6" height="6" fill="#eef27a" opacity="0.45"/>
<rect x="843.0" y="293.5" width="4" height="4" fill="#cdef6e"/>
<rect x="875.5" y="240.8" width="6" height="6" fill="#eef27a" opacity="0.45"/>
<rect x="876.5" y="241.8" width="4" height="4" fill="#cdef6e"/>
<rect x="876.3" y="276.4" width="6" height="6" fill="#eef27a" opacity="0.45"/>
<rect x="877.3" y="277.4" width="4" height="4" fill="#cdef6e"/>
<rect x="930.3" y="215.0" width="6" height="6" fill="#eef27a" opacity="0.45"/>
<rect x="931.3" y="216.0" width="4" height="4" fill="#cdef6e"/>
<rect x="931.2" y="250.6" width="6" height="6" fill="#eef27a" opacity="0.45"/>
<rect x="932.2" y="251.6" width="4" height="4" fill="#cdef6e"/>
<rect x="964.5" y="198.9" width="6" height="6" fill="#eef27a" opacity="0.45"/>
<rect x="965.5" y="199.9" width="4" height="4" fill="#cdef6e"/>
<rect x="965.5" y="234.4" width="6" height="6" fill="#eef27a" opacity="0.45"/>
<rect x="966.5" y="235.4" width="4" height="4" fill="#cdef6e"/>
<line x1="504.6" y1="316.6" x2="504.6" y2="299" stroke="#8a9ac0" stroke-width="1"/>
<line x1="504.6" y1="316.6" x2="491" y2="323.1" stroke="#c08a8a" stroke-width="1"/>
<line x1="504.6" y1="316.6" x2="519.7" y2="323.1" stroke="#8ac48a" stroke-width="1"/>
<path d="M502.7,293.6 H506.3 L502.7,297.6 H506.3" stroke="#333" stroke-width="0.9" fill="none"/>
<path d="M486.3,323.4 L489.7,326.8 M489.7,323.4 L486.3,326.8" stroke="#333" stroke-width="0.9" fill="none"/>
<path d="M520.6,323.4 L522.4,325.1 L524.2,323.4 M522.4,325.1 L520.8,327" stroke="#333" stroke-width="0.9" fill="none"/>
</svg></div>
<div id="tb2"><svg width="578" height="29" viewBox="446 353 578 29" style="position:absolute;left:0;top:0" fill="none" stroke="#2b2b2b">
<rect x="760" y="355" width="23.6" height="21" fill="#c8def4" stroke="none"/>
<rect x="788" y="355" width="68.7" height="21" fill="#c8def4" stroke="none"/>
<line x1="810.6" y1="355" x2="810.6" y2="376" stroke="#b4cce4" stroke-width="1"/>
<line x1="833" y1="355" x2="833" y2="376" stroke="#b4cce4" stroke-width="1"/>
<g transform="translate(279.3,352)">
<g stroke="#555" stroke-width="1" stroke-dasharray="1.3,1.1">
<path d="M180.7,5.5 L187.4,9.1 L187.4,16.1 L180.7,19.7 L174,16.1 L174,9.1 Z"/>
<path d="M175.5,10.1 L180.8,12.9 L186.1,10.1 M180.8,12.9 V15.5"/>
</g>
<path d="M176.3,16 L179.3,19 L176.3,22.2 M180.8,16 L183.8,19 L180.8,22.2" stroke="#111" stroke-width="2"/>
<path d="M203.6,5.2 L210.6,9 L210.6,16.4 L203.6,20.2 L196.6,16.4 L196.6,9 Z" stroke="#333" stroke-width="1.3"/>
<path d="M196.8,9.2 L203.6,12.8 L210.4,9.2 M203.6,12.8 V17" stroke="#333" stroke-width="1.2"/>
<path d="M201.4,16.4 H205.8 L204.5,18.6 H202.7 Z M201.6,21 H205.6 V22.4 H201.6 Z" fill="#333" stroke="none"/>
</g>
<line x1="496.4" y1="356" x2="496.4" y2="376" stroke="#e4e4e4" stroke-width="1"/>
<!-- view all -->
<path d="M503,361 V358.3 H505.8 M512.5,358.3 H515.2 V361 M503,368.5 V371.2 H505.8" stroke="#222" stroke-width="1.5"/>
<circle cx="508.8" cy="364.4" r="3.4" stroke="#1a1a1a" stroke-width="2"/>
<path d="M511.2,366.9 L515,370.8" stroke="#1a1a1a" stroke-width="2.3"/>
<!-- zoom in -->
<circle cx="531.6" cy="364.5" r="3.6" stroke="#1a1a1a" stroke-width="1.7"/>
<path d="M529.8,364.5 H533.4 M531.6,362.7 V366.3" stroke="#1a1a1a" stroke-width="1"/>
<path d="M534.4,367.3 L538.4,371.4" stroke="#1a1a1a" stroke-width="2.3"/>
<!-- zoom out -->
<circle cx="554.6" cy="364.5" r="3.6" stroke="#1a1a1a" stroke-width="1.7"/>
<path d="M552.8,364.5 H556.4" stroke="#1a1a1a" stroke-width="1"/>
<path d="M557.4,367.3 L561.4,371.4" stroke="#1a1a1a" stroke-width="2.3"/>
<!-- reset -->
<path d="M573.3,366.4 A5.7,5.7 0 1 0 576.4,360.9" stroke="#111" stroke-width="1.9"/>
<path d="M572.6,359.6 L577.2,360.2 L573.2,364.4 Z" fill="#111" stroke="#111" stroke-width="0.6"/>
<line x1="592.7" y1="356" x2="592.7" y2="376" stroke="#e4e4e4" stroke-width="1"/>
<!-- right view -->
<path d="M603,358.8 H607 L608.8,364.4 L607,370 H603 L600,364.4 Z M600,364.4 H605.5 L607,358.8 M605.5,364.4 L607,370" stroke="#333" stroke-width="1.1"/>
<path d="M608.8,362.6 L612.8,364.4 L608.8,366.2 Z" fill="#111" stroke="none"/>
<!-- top view -->
<path d="M624.2,364 L629.4,361.6 L634.6,364 V369.6 L629.4,371.6 L624.2,369.6 Z M624.2,364 L629.4,366 L634.6,364 M629.4,366 V371.6" stroke="#333" stroke-width="1.1"/>
<path d="M627.8,362 L629.4,357.8 L631,362 Z" fill="#111" stroke="none"/>
<!-- bottom view -->
<path d="M647.6,358.6 H654.4 L656.4,361.6 V365.4 L653.6,368 H648.4 L645.6,365.4 V361.6 Z M651,359 V364.6 M646,365 L651,364.6 L656,365" stroke="#333" stroke-width="1.1"/>
<path d="M649.4,368 L651,372.2 L652.6,368 Z" fill="#111" stroke="none"/>
<!-- left view -->
<path d="M675,358.8 H679.6 L682.2,364.4 L679.6,370 H675 L672.4,364.4 Z M682.2,364.4 H674.8 L673.6,358.8 M674.8,364.4 L673.6,370" stroke="#333" stroke-width="1.1"/>
<path d="M672.4,362.6 L668.6,364.4 L672.4,366.2 Z" fill="#111" stroke="none"/>
<!-- front -->
<path d="M693.2,362.6 L698.4,360.2 L703.6,362.6 V369 L698.4,371.4 L693.2,369 Z" stroke="#333" stroke-width="1.1"/>
<path d="M693.2,362.6 L698.4,365 V371.4 L693.2,369 Z" fill="#222" stroke="#222"/>
<path d="M698.4,365 L703.6,362.6" stroke="#333" stroke-width="1"/>
<!-- back -->
<path d="M716,362.6 L721.2,360.2 L726.4,362.6 V369 L721.2,371.4 L716,369 Z M716,362.6 L721.2,365 L726.4,362.6 M721.2,365 V371.4" stroke="#333" stroke-width="1.1"/>
<path d="M721.2,360.2 L726.4,362.6 V367.5 L721.2,365 Z" fill="#222" stroke="none"/>
<line x1="735.4" y1="356" x2="735.4" y2="376" stroke="#e4e4e4" stroke-width="1"/>
<!-- perspective -->
<path d="M742.6,365.6 H749.4 V371.8 H742.6 Z M742.6,365.6 L755.8,359.2 L749.4,371.8 M749.4,365.6 L755.8,359.2" stroke="#222" stroke-width="1.2"/>
<!-- ortho -->
<rect x="765.6" y="361.3" width="15" height="12.6" stroke="#1a1a1a" stroke-width="1.5"/>
<rect x="768.4" y="364" width="9.4" height="7" stroke="#1a1a1a" stroke-width="1.3"/>
<path d="M765.6,361.3 L768.4,364 M780.6,361.3 L777.8,364 M765.6,373.9 L768.4,371 M780.6,373.9 L777.8,371" stroke="#333" stroke-width="0.8"/>
<!-- axes -->
<path d="M799.7,359 V366.6 H808" stroke="#222" stroke-width="1.1"/>
<path d="M799.7,366.6 L794,371.6" stroke="#777" stroke-width="1.2"/>
<circle cx="799.7" cy="366.6" r="0.9" fill="#111" stroke="none"/>
<!-- scale -->
<path d="M822.6,358.8 V366.4 H831.2" stroke="#222" stroke-width="1"/>
<path d="M822.6,360 H824 M822.6,362 H824 M822.6,364 H824 M824.6,366.4 V365 M826.6,366.4 V365 M828.6,366.4 V365" stroke="#222" stroke-width="0.8"/>
<path d="M822.6,366.4 L816.8,371.4" stroke="#777" stroke-width="2"/>
<text x="827.4" y="373.6" font-family="Liberation Sans" font-size="6.8" fill="#222" stroke="none" text-anchor="middle">10</text>
<!-- edges -->
<path d="M840.8,362.2 H850.4 V370.6 H840.8 Z" stroke="#333" stroke-width="0.9" stroke-dasharray="1.4,1"/>
<g fill="#111" stroke="none"><circle cx="840.8" cy="362.2" r="1"/><circle cx="850.4" cy="362.2" r="1"/><circle cx="840.8" cy="370.6" r="1"/><circle cx="850.4" cy="370.6" r="1"/></g>
</svg>
</div>
<div id="chead"><span>Console</span><svg width="8" height="8" style="position:absolute;left:569px;top:3px"><path d="M1.4,1.4 L6.4,6.4 M6.4,1.4 L1.4,6.4" stroke="#1a1a1a" stroke-width="1.5"/></svg></div>
<div id="cbody"></div>
<div class="cl" style="top:397px;left:451px">Total rendering time: 0 hours, 0 minutes, 0 seconds</div><div class="cl" style="top:407px;left:458px">Top level object is a 3D object:</div><div class="cl" style="top:417px;left:458px">Simple:</div><div class="cl" style="top:417px;left:505px">yes</div><div class="cl" style="top:427px;left:458px">Vertices:</div><div class="cl" style="top:427px;left:507px">88</div><div class="cl" style="top:437px;left:458px">Halfedges:</div><div class="cl" style="top:437px;left:509px">272</div><div class="cl" style="top:447px;left:458px">Edges:</div><div class="cl" style="top:447px;left:504.5px">136</div><div class="cl" style="top:457px;left:458px">Halffacets:</div><div class="cl" style="top:457px;left:509px">90</div><div class="cl" style="top:467px;left:458px">Facets:</div><div class="cl" style="top:467px;left:507px">45</div><div class="cl" style="top:477px;left:458px">Volumes:</div><div class="cl" style="top:477px;left:513px">2</div><div class="cl" style="top:487px;left:451px">Rendering finished.</div>
<div id="sb"></div>
<svg width="13" height="101" viewBox="1011 397 13 101" style="position:absolute;left:1011px;top:397px">
<rect x="1012.2" y="440.2" width="11.2" height="44.2" fill="#cdcdcd"/>
<path d="M1015,406.6 L1017.6,404 L1020.2,406.6" stroke="#555" stroke-width="1.1" fill="none"/>
<path d="M1015,490 L1017.6,492.6 L1020.2,490" stroke="#555" stroke-width="1.1" fill="none"/>
</svg>
</body></html>
